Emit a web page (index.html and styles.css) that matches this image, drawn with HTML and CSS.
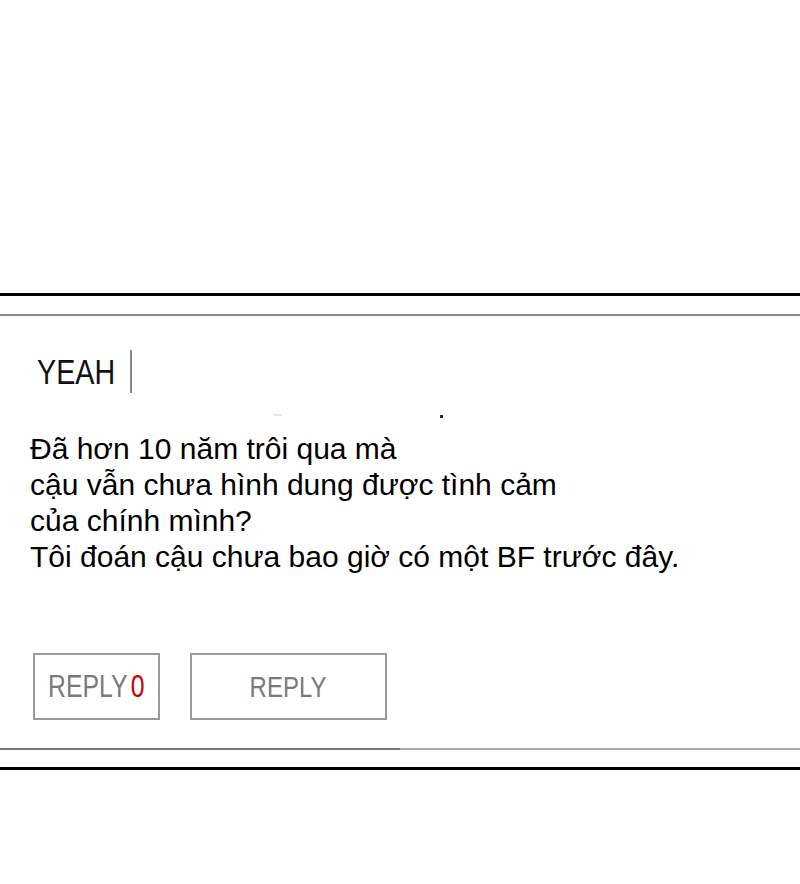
FILE: index.html
```html
<!DOCTYPE html>
<html lang="vi">
<head>
<meta charset="utf-8">
<link rel="stylesheet" href="styles.css">
</head>
<body>
<div class="page">
  <div class="spacer-top"></div>
  <div class="rule rule-black"></div>
  <div class="rule rule-gray"></div>
  <section class="comment">
    <div class="head">
      <span class="name">YEAH</span>
      <span class="bar"></span>
    </div>
    <div class="specks"><span class="speck faint"></span><span class="speck dark"></span></div>
    <p class="message">Đã hơn 10 năm trôi qua mà<br>cậu vẫn chưa hình dung được tình cảm<br>của chính mình?<br>Tôi đoán cậu chưa bao giờ có một BF trước đây.</p>
    <div class="actions">
      <div class="btn btn-count"><span class="label">REPLY<span class="count">0</span></span></div>
      <div class="btn btn-reply"><span class="label">REPLY</span></div>
    </div>
  </section>
  <div class="rule rule-split"></div>
  <div class="rule rule-black bottom"></div>
</div>
</body>
</html>
```

FILE: styles.css
```css
html, body {
  margin: 0;
  padding: 0;
  background: #ffffff;
}
.page {
  width: 800px;
  height: 884px;
  font-family: "Liberation Sans", Arial, sans-serif;
  color: #000;
}
.spacer-top {
  height: 293px;
}
.rule {
  width: 800px;
}
.rule-black {
  height: 3px;
  background: #000;
}
.rule-gray {
  height: 2px;
  margin-top: 18px;
  background: #8a8a8a;
}
.comment {
  height: 432px;
  display: flex;
  flex-direction: column;
}
.head {
  display: flex;
  align-items: center;
  margin-top: 34px;
  padding-left: 37px;
  height: 43px;
}
.name {
  display: inline-block;
  font-size: 35px;
  line-height: 43px;
  color: #111;
  transform: scaleX(0.82);
  transform-origin: left center;
}
.bar {
  width: 2px;
  height: 43px;
  background: #8c8c8c;
  margin-left: -2px;
}
.specks {
  height: 38px;
  position: relative;
}
.speck {
  position: absolute;
  top: 21px;
  height: 2px;
}
.speck.faint {
  left: 274px;
  width: 8px;
  background: #e6e6e6;
}
.speck.dark {
  left: 440px;
  width: 3px;
  height: 3px;
  top: 22px;
  background: #222;
}
.message {
  margin: 0;
  padding-left: 30px;
  font-size: 30px;
  line-height: 36px;
  color: #000;
}
.actions {
  display: flex;
  gap: 30px;
  padding-left: 33px;
  margin-top: 78px;
}
.btn {
  box-sizing: border-box;
  height: 67px;
  border: 2px solid #9a9a9a;
  display: flex;
  align-items: center;
  justify-content: center;
  font-size: 30px;
  color: #7a7a7a;
}
.label {
  display: inline-block;
  transform: scaleX(0.8);
  white-space: nowrap;
}
.btn-count {
  width: 127px;
  font-size: 31px;
}
.btn-reply {
  width: 197px;
}
.count {
  color: #cc0000;
  margin-left: 4px;
}
.rule-split {
  height: 2px;
  background: linear-gradient(to right, #777 0, #777 50%, #a8a8a8 50%, #a8a8a8 100%);
}
.rule-black.bottom {
  margin-top: 17px;
}
```
